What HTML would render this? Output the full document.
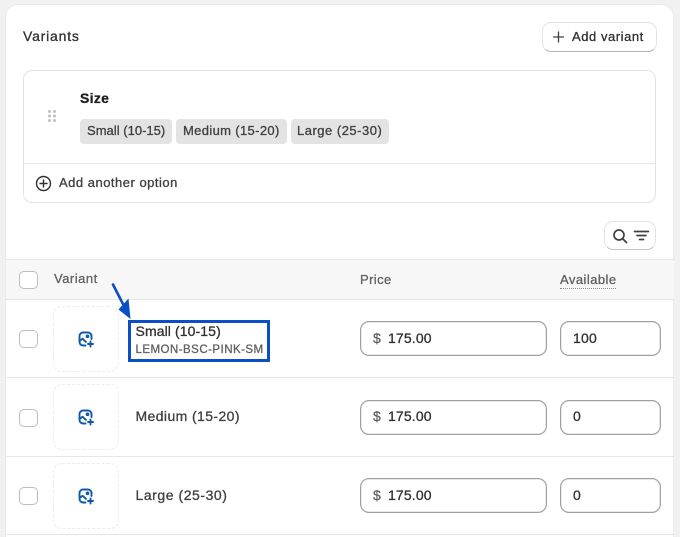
<!DOCTYPE html>
<html>
<head>
<meta charset="utf-8">
<style>
html,body{margin:0;padding:0;width:680px;height:537px;overflow:hidden;background:#f1f1f1}
body{font-family:"Liberation Sans",sans-serif;color:#303030;position:relative}
#w{left:0;top:0;width:680px;height:537px;overflow:hidden;filter:blur(.3px)}
div,span.t{position:absolute;box-sizing:border-box}
.t{white-space:nowrap;line-height:18px;-webkit-text-stroke:.3px currentColor}
.card{left:5px;top:4px;width:669px;height:533px;background:#fff;border-radius:13px 13px 0 0;border:1px solid #ebebeb;border-bottom:0}
.cb{left:19px;width:19px;height:18px;background:#fff;border:1.5px solid #bdbdbd;border-radius:5px}
.tile{left:53px;width:66px;height:66px;border:1px dashed #ececec;border-radius:9px}
.inp{height:35px;background:#fff;border:1px solid #a0a0a0;border-radius:9px;box-shadow:inset 0 0 0 .5px #d0d0d0}
.chip{top:119px;height:25px;background:#e3e3e3;border-radius:4px}
.line{left:6px;width:668px;height:1px;background:#e6e6e6}
svg{position:absolute}
</style>
</head>
<body>
<div id="w">
<div class="card"></div>

<span class="t" style="left:23px;top:27px;font-size:14px;letter-spacing:.8px;color:#303030">Variants</span>

<div style="left:542px;top:22px;width:115px;height:30px;background:#fff;border:1px solid #e3e3e3;border-bottom:1.5px solid #b5b5b5;border-radius:9px"></div>
<svg style="left:552px;top:30px" width="14" height="14" viewBox="0 0 14 14"><path d="M6.500 2v10M1.500 7h10" stroke="#404040" stroke-width="1.300" fill="none" stroke-linecap="round"/></svg>
<span class="t" style="left:572px;top:27.500px;font-size:13px;letter-spacing:.55px;color:#303030">Add variant</span>

<div style="left:23px;top:70px;width:633px;height:133px;background:#fff;border:1px solid #e3e3e3;border-radius:9px"></div>
<div style="left:24px;top:163px;width:631px;height:1px;background:#e8e8e8"></div>

<svg style="left:47px;top:109px" width="11" height="15" viewBox="0 0 11 15" fill="#c0c0c0">
<circle cx="2.500" cy="2.500" r="1.500"/><circle cx="7.500" cy="2.500" r="1.500"/>
<circle cx="2.500" cy="7" r="1.500"/><circle cx="7.500" cy="7" r="1.500"/>
<circle cx="2.500" cy="11.500" r="1.500"/><circle cx="7.500" cy="11.500" r="1.500"/>
</svg>

<span class="t" style="left:80px;top:89px;font-size:14px;font-weight:700;letter-spacing:.3px;color:#1f1f1f">Size</span>

<div class="chip" style="left:80px;width:92px"></div>
<span class="t" style="left:87px;top:122px;font-size:13px;letter-spacing:.02px;color:#404040">Small (10-15)</span>
<div class="chip" style="left:176px;width:111px"></div>
<span class="t" style="left:183px;top:122px;font-size:13px;letter-spacing:.35px;color:#404040">Medium (15-20)</span>
<div class="chip" style="left:291px;width:98px"></div>
<span class="t" style="left:297px;top:122px;font-size:13px;letter-spacing:.5px;color:#404040">Large (25-30)</span>

<svg style="left:35px;top:175px" width="17" height="17" viewBox="0 0 17 17"><circle cx="8.500" cy="8.500" r="7" fill="none" stroke="#303030" stroke-width="1.400"/><path d="M8.500 5v7M5 8.500h7" stroke="#303030" stroke-width="1.400" stroke-linecap="round"/></svg>
<span class="t" style="left:59px;top:174px;font-size:13px;letter-spacing:.5px;color:#404040">Add another option</span>

<div style="left:604px;top:221px;width:52px;height:29px;background:#fff;border:1px solid #e3e3e3;border-bottom:1.500px solid #c4c4c4;border-radius:9px"></div>
<svg style="left:612px;top:228px" width="16" height="16" viewBox="0 0 16 16"><circle cx="7" cy="7" r="5" fill="none" stroke="#404040" stroke-width="1.700"/><path d="M10.700 10.700L14.500 14.500" stroke="#404040" stroke-width="1.800" stroke-linecap="round"/></svg>
<svg style="left:633px;top:229px" width="17" height="14" viewBox="0 0 17 14"><path d="M1.500 2.500h14M4 6.500h9M6.500 10.500h4" stroke="#404040" stroke-width="1.700" stroke-linecap="round" fill="none"/></svg>

<div style="left:6px;top:260px;width:668px;height:39px;background:#f7f7f7"></div>
<div class="line" style="top:259px"></div>
<div class="line" style="top:299px"></div>
<div class="line" style="top:377px"></div>
<div class="line" style="top:456px"></div>
<div class="line" style="top:534px"></div>

<div class="cb" style="top:271px"></div>
<span class="t" style="left:54px;top:269.500px;font-size:13px;letter-spacing:.5px;color:#616161">Variant</span>
<span class="t" style="left:360px;top:270.500px;font-size:13px;letter-spacing:.4px;color:#616161">Price</span>
<span class="t" style="left:560px;top:270.500px;font-size:13px;letter-spacing:.45px;color:#616161">Available</span>
<div style="left:560px;top:288px;width:56px;height:0;border-top:1px dotted #8a8a8a"></div>

<!-- Row 1 -->
<div class="cb" style="top:330px"></div>
<div class="tile" style="top:306px"></div>
<svg style="left:77px;top:330px" width="18" height="18" viewBox="0 0 18 18" fill="none" stroke="#1059a8" stroke-width="1.900" stroke-linecap="round" stroke-linejoin="round"><path d="M8.500 15.500H6A3.500 3.500 0 0 1 2.500 12V6A3.500 3.500 0 0 1 6 2.500h5A3.500 3.500 0 0 1 14.500 6v3"/><path d="M2.700 11l2.800-2.300 3.500 3.200"/><circle cx="10.500" cy="6.300" r=".9" fill="#1059a8"/><path d="M13.500 11.500v5M11 14h5"/></svg>
<span class="t" style="left:135.500px;top:322px;font-size:14px;letter-spacing:.1px;color:#303030">Small (10-15)</span>
<span class="t" style="left:135.500px;top:340.500px;font-size:11.500px;letter-spacing:.47px;color:#616161">LEMON-BSC-PINK-SM</span>
<div style="left:128px;top:320px;width:142px;height:42px;border:3px solid #0a4fc4"></div>
<svg style="left:0;top:0" width="680" height="537"><path d="M113 284.500L124 306" stroke="#0a4fc4" stroke-width="2.600" stroke-linecap="round" fill="none"/><path d="M118.500 309.500L128.500 298.500L130.500 319z" fill="#0a4fc4"/></svg>
<div class="inp" style="left:359.500px;top:321px;width:187.500px"></div>
<span class="t" style="left:373px;top:329px;font-size:14px;color:#616161">$</span>
<span class="t" style="left:388px;top:329px;font-size:14px;letter-spacing:.15px;color:#303030">175.00</span>
<div class="inp" style="left:560px;top:321px;width:101px"></div>
<span class="t" style="left:573px;top:329px;font-size:14px;letter-spacing:.2px;color:#303030">100</span>

<!-- Row 2 -->
<div class="cb" style="top:409px"></div>
<div class="tile" style="top:384px"></div>
<svg style="left:77px;top:408px" width="18" height="18" viewBox="0 0 18 18" fill="none" stroke="#1059a8" stroke-width="1.900" stroke-linecap="round" stroke-linejoin="round"><path d="M8.500 15.500H6A3.500 3.500 0 0 1 2.500 12V6A3.500 3.500 0 0 1 6 2.500h5A3.500 3.500 0 0 1 14.500 6v3"/><path d="M2.700 11l2.800-2.300 3.500 3.200"/><circle cx="10.500" cy="6.300" r=".9" fill="#1059a8"/><path d="M13.500 11.500v5M11 14h5"/></svg>
<span class="t" style="left:135.500px;top:407px;font-size:14px;letter-spacing:.4px;color:#404040">Medium (15-20)</span>
<div class="inp" style="left:359.500px;top:399.500px;width:187.500px"></div>
<span class="t" style="left:373px;top:407px;font-size:14px;color:#616161">$</span>
<span class="t" style="left:388px;top:407px;font-size:14px;letter-spacing:.15px;color:#303030">175.00</span>
<div class="inp" style="left:560px;top:399.500px;width:101px"></div>
<span class="t" style="left:573px;top:407px;font-size:14px;color:#303030">0</span>

<!-- Row 3 -->
<div class="cb" style="top:487px"></div>
<div class="tile" style="top:463px"></div>
<svg style="left:77px;top:487px" width="18" height="18" viewBox="0 0 18 18" fill="none" stroke="#1059a8" stroke-width="1.900" stroke-linecap="round" stroke-linejoin="round"><path d="M8.500 15.500H6A3.500 3.500 0 0 1 2.500 12V6A3.500 3.500 0 0 1 6 2.500h5A3.500 3.500 0 0 1 14.500 6v3"/><path d="M2.700 11l2.800-2.300 3.500 3.200"/><circle cx="10.500" cy="6.300" r=".9" fill="#1059a8"/><path d="M13.500 11.500v5M11 14h5"/></svg>
<span class="t" style="left:135.500px;top:486px;font-size:14px;letter-spacing:.55px;color:#404040">Large (25-30)</span>
<div class="inp" style="left:359.500px;top:478px;width:187.500px"></div>
<span class="t" style="left:373px;top:486px;font-size:14px;color:#616161">$</span>
<span class="t" style="left:388px;top:486px;font-size:14px;letter-spacing:.15px;color:#303030">175.00</span>
<div class="inp" style="left:560px;top:478px;width:101px"></div>
<span class="t" style="left:573px;top:486px;font-size:14px;color:#303030">0</span>
</div>
</body>
</html>
